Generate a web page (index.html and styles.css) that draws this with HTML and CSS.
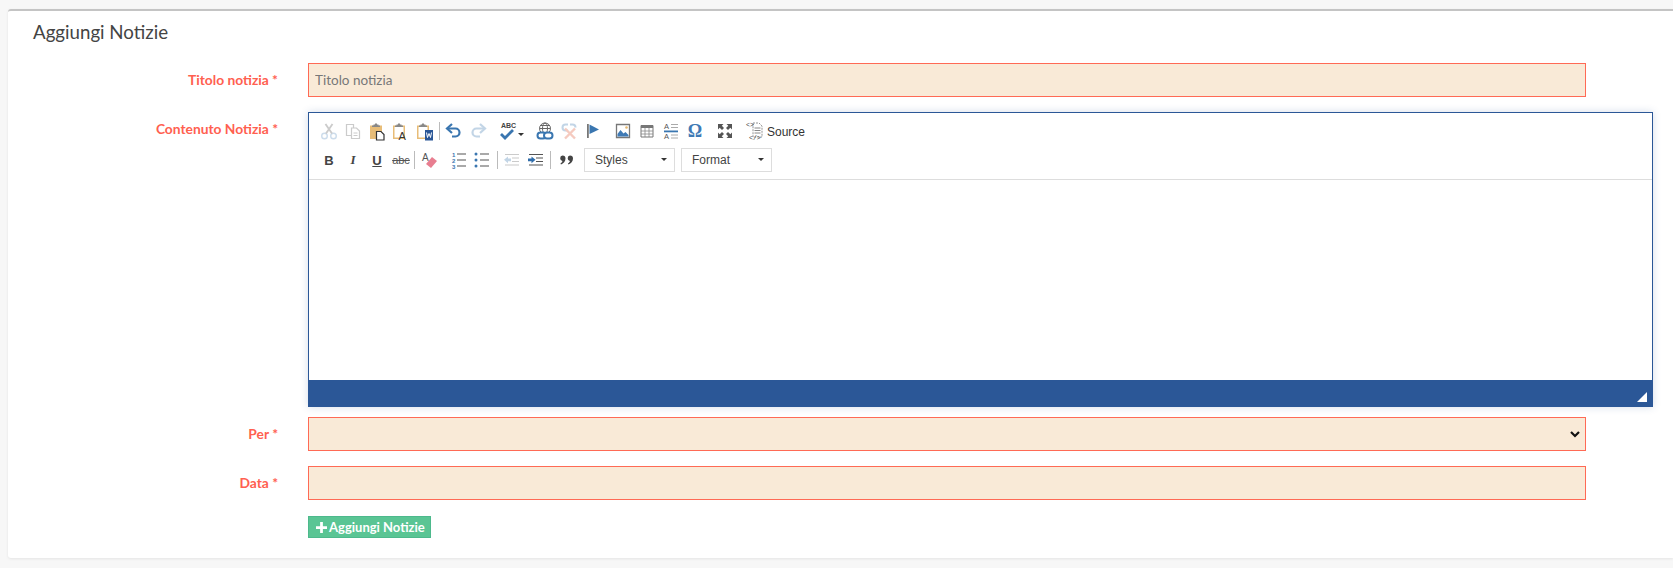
FILE: index.html
```html
<!DOCTYPE html>
<html lang="it">
<head>
<meta charset="utf-8">
<title>Aggiungi Notizie</title>
<link rel="stylesheet" href="styles.css">
</head>
<body>
<main class="card">
  <h2 class="title">Aggiungi Notizie</h2>
  <form class="form">
    <label class="label row-first">Titolo notizia *</label>
    <input class="field field-first" type="text" placeholder="Titolo notizia">

    <label class="label label-top">Contenuto Notizia *</label>
    <div class="editor">
      <div class="toolbar">
        <div class="tbrow">
          <span class="btn off"><svg viewBox="0 0 20 20"><g fill="none" stroke="#5b8fc0" stroke-width="1.4"><circle cx="5.500" cy="15" r="2.800"/><circle cx="14.500" cy="15" r="2.800"/></g><path d="M7 12.500 13.500 3M13 12.500 6.500 3" stroke="#555" stroke-width="1.800" fill="none"/></svg></span>
          <span class="btn off"><svg viewBox="0 0 20 20"><g fill="#fff" stroke="#555" stroke-width="1.200"><path d="M3.500 3.500h7v11h-7z"/><path d="M8.500 7h5l3 3v7.500h-8z"/></g><path d="M10.500 12h4M10.500 14.500h4" stroke="#555"/></svg></span>
          <span class="btn"><svg viewBox="0 0 20 20"><path d="M3 4.500h12v13.500H3z" fill="#e8bd78"/><path d="M6.500 4.500V3.500H8V2.500h2v1h1.500v1H13v1.500H5V4.500z" fill="#888"/><path d="M9.500 10.500h4.500l3 3V19H9.500z" fill="#fff" stroke="#333" stroke-width="1.200"/></svg></span>
          <span class="btn"><svg viewBox="0 0 20 20"><path d="M2 4.500h12v13.500H2z" fill="#e8bd78"/><path d="M3.500 6h9v10.500h-9z" fill="#fff"/><path d="M5.500 4.500V3.500H7V2.500h2v1h1.500v1H12V6H4V4.500z" fill="#888"/><text x="7.500" y="19" class="pastea">A</text></svg></span>
          <span class="btn"><svg viewBox="0 0 20 20"><path d="M2 4.500h12v13.500H2z" fill="#e8bd78"/><path d="M3.500 6h9v10.500h-9z" fill="#fff"/><path d="M5.500 4.500V3.500H7V2.500h2v1h1.500v1H12V6H4V4.500z" fill="#888"/><path d="M10 9h8v10.500h-8z" fill="#2b5797"/><path d="M11.500 11.500l1 5 1.500-4 1.500 4 1-5" stroke="#fff" fill="none"/></svg></span>
          <span class="sep"></span>
          <span class="btn"><svg viewBox="0 0 20 20"><path d="M4 7.500h7.500a4 4 0 0 1 0 8H8" fill="none" stroke="#3a76b0" stroke-width="2.200"/><path d="M8 3 3 7.500 8 12" fill="none" stroke="#3a76b0" stroke-width="2.200"/></svg></span>
          <span class="btn off"><svg viewBox="0 0 20 20"><path d="M16 7.500H8.500a4 4 0 0 0 0 8H12" fill="none" stroke="#3a76b0" stroke-width="2.200"/><path d="M12 3l5 4.500L12 12" fill="none" stroke="#3a76b0" stroke-width="2.200"/></svg></span>
          <span class="btn btn-spell"><svg viewBox="0 0 36 20"><text x="7" y="7" class="abc-small">ABC</text><path d="M7 13l4 4 8-8" fill="none" stroke="#3a76b0" stroke-width="2.800"/><path d="M24 12h6l-3 3z" fill="#333"/></svg></span>
          <span class="btn"><svg viewBox="0 0 20 20"><g fill="none" stroke="#666" stroke-width="1"><circle cx="10" cy="7.500" r="5.500"/><ellipse cx="10" cy="7.500" rx="2.500" ry="5.500"/><path d="M4.500 7.500h11M5.500 4.500h9"/></g><g fill="#fff" stroke="#3a76b0" stroke-width="2"><rect x="2.500" y="11.500" width="8.500" height="6" rx="3"/><rect x="9" y="11.500" width="8.500" height="6" rx="3"/></g></svg></span>
          <span class="btn off"><svg viewBox="0 0 20 20"><g fill="none" stroke="#3a76b0" stroke-width="2"><path d="M9 3.500H6.500a3 3 0 0 0 0 6H9"/><path d="M11 3.500h2.500a3 3 0 0 1 3 3"/></g><path d="M6 7.500l10 10M16 7.500l-10 10" stroke="#e0532f" stroke-width="2.400"/></svg></span>
          <span class="btn"><svg viewBox="0 0 20 20"><path d="M4 3h1.800v14H4z" fill="#777"/><path d="M6.500 3.500 16 8.500l-9.500 4.500z" fill="#3a76b0"/></svg></span>
          <span class="btn ml-6"><svg viewBox="0 0 20 20"><path d="M3.500 3.500h13v13h-13z" fill="#fff" stroke="#777" stroke-width="1.300"/><circle cx="13.500" cy="6.500" r="1.300" fill="#e6b96f"/><path d="M4.500 15.500V13l3-4 3 3.500 2-1.500 3 3v1.500z" fill="#3f7ab5"/></svg></span>
          <span class="btn"><svg viewBox="0 0 20 20"><path d="M4 4.500h12v11.500H4z" fill="#fff" stroke="#777"/><path d="M4 4.500h12v2.500H4z" fill="#777"/><path d="M4 10h12M4 13h12M8 7v9M12 7v9" stroke="#888" stroke-width=".8"/></svg></span>
          <span class="btn"><svg viewBox="0 0 20 20"><path d="M3 9.500h14v1.800H3z" fill="#3a76b0"/><path d="M10 3.500h7M10 6.500h7M10 14h7M10 17h7" stroke="#aaa" stroke-width="1"/><text x="3" y="8" class="bidi">A</text><text x="3" y="18" class="bidi">A</text></svg></span>
          <span class="btn"><svg viewBox="0 0 20 20"><text x="10" y="16" class="omega">Ω</text></svg></span>
          <span class="btn ml-6"><svg viewBox="0 0 20 20"><path d="M3 3h5.500L6.800 4.700 9 7 7 9 4.700 6.800 3 8.500zM17 3v5.500l-1.700-1.700L13 9l-2-2 2.300-2.300L11.500 3zM3 17v-5.500l1.700 1.700L7 11l2 2-2.300 2.300L8.500 17zM17 17h-5.500l1.700-1.700L11 13l2-2 2.300 2.300 1.700-1.800z" fill="#555"/></svg></span>
          <span class="btn-source"><svg class="src-icon" viewBox="0 0 22 20"><path d="M8 2h6l3 3v11H8z" fill="none" stroke="#888" stroke-width=".9" stroke-dasharray="2 1"/><path d="M9.500 7h6M9.500 9.500h6M9.500 12h6" stroke="#888"/><text x="1" y="6" class="srcbr">&lt;&gt;</text><text x="4" y="19" class="srcbr">&lt;/&gt;</text></svg><span class="src-text">Source</span></span>
        </div>
        <div class="tbrow tbrow-second">
          <span class="btn txt bold">B</span>
          <span class="btn txt ital">I</span>
          <span class="btn txt under">U</span>
          <span class="btn txt strike">abc</span>
          <span class="sep sep-a"></span>
          <span class="btn"><svg viewBox="0 0 20 20"><text x="2" y="11" class="bidi-lg">A</text><path d="M12 7l5 4-6 7-5-4z" fill="#e87e90"/></svg></span>
          <span class="btn ml-5"><svg viewBox="0 0 20 20"><path d="M8 4h9M8 10h9M8 16h9" stroke="#555" stroke-width="1.200"/><text x="3" y="6.500" class="num">1</text><text x="3" y="12.500" class="num">2</text><text x="3" y="18.500" class="num">3</text></svg></span>
          <span class="btn mln1"><svg viewBox="0 0 20 20"><path d="M8 4h9M8 10h9M8 16h9" stroke="#555" stroke-width="1.200"/><g fill="#3a76b0"><circle cx="4" cy="4" r="1.500"/><circle cx="4" cy="10" r="1.500"/><circle cx="4" cy="16" r="1.500"/></g></svg></span>
          <span class="sep sep-b"></span>
          <span class="btn off"><svg viewBox="0 0 20 20"><path d="M3 4.500h14M10 8h7M10 11.500h7M3 15h14" stroke="#555" stroke-width="1.200"/><path d="M2 9.800 6 6.500v2h3v2.800H6v2z" fill="#3a76b0"/></svg></span>
          <span class="btn"><svg viewBox="0 0 20 20"><path d="M3 4.500h14M10 8h7M10 11.500h7M3 15h14" stroke="#555" stroke-width="1.200"/><path d="M9.500 9.800 5.500 6.500v2H2v2.800h3.500v2z" fill="#2f6dab"/></svg></span>
          <span class="sep sep-c"></span>
          <span class="btn"><svg viewBox="0 0 20 20"><path d="M6.500 5.500A3 3 0 0 1 9.500 8.500c0 3-2 5-4.500 6l-.6-1.100c1.200-.6 1.900-1.500 2-2.400a2.800 2.800 0 0 1 .1-5.500zM14 5.500a3 3 0 0 1 3 3c0 3-2 5-4.500 6l-.6-1.100c1.200-.6 1.900-1.500 2-2.400a2.800 2.800 0 0 1 .1-5.500z" fill="#444"/></svg></span>
          <span class="combo combo-a">Styles<i class="caret"></i></span>
          <span class="combo combo-b">Format<i class="caret"></i></span>
        </div>
      </div>
      <div class="content"></div>
      <div class="bottom"><i class="resize"></i></div>
    </div>

    <label class="label label-per">Per *</label>
    <select class="field select field-per"><option></option></select>

    <label class="label">Data *</label>
    <input class="field" type="text">

    <span></span>
    <div class="actions"><button class="submit" type="button"><svg class="plus" viewBox="0 0 12 12"><path d="M4.500 0h3v4.500H12v3H7.500V12h-3V7.500H0v-3h4.500z" fill="#fff"/></svg>Aggiungi Notizie</button></div>
  </form>
</main>
</body>
</html>
```

FILE: styles.css
```css
* { box-sizing: border-box; }
html, body { height: 100%; }
body {
  margin: 0;
  padding: 9px 0 10px 8px;
  background: #f7f7f7;
  font-family: Lato, "Noto Sans", sans-serif;
  overflow: hidden;
}
.card {
  height: 549px;
  background: #fff;
  border-top: 2px solid #c4c4c4;
  border-radius: 3px 0 0 3px;
  box-shadow: 0 1px 3px rgba(0,0,0,.08);
  padding: 0 0 0 25px;
}
.title {
  margin: 0;
  padding-top: 9px;
  font-size: 18.700px;
  line-height: 24px;
  font-weight: 400;
  color: #444;
}
.form {
  display: grid;
  grid-template-columns: 245px 1fr;
  column-gap: 30px;
  margin-top: 19px;
  align-items: center;
}
.label {
  text-align: right;
  font-size: 13.800px;
  font-weight: 700;
  color: #ff6050;
  line-height: 20px;
  margin-top: 15px;
  align-self: center;
}
.row-first { margin-top: 0; }
.label-top { align-self: start; margin-top: 22px; }
.label-per { margin-top: 10px; }
.field {
  display: block;
  width: 1278px;
  height: 34px;
  margin: 15px 0 0;
  padding: 0 6px;
  border: 1px solid #ff6a55;
  border-radius: 0;
  background: #f9ead7;
  font-family: inherit;
  font-size: 13.500px;
  color: #555;
  outline: none;
}
.field-first { margin-top: 0; }
.field-per { margin-top: 10px; }
.field::placeholder { color: #777; opacity: 1; }
.select {
  appearance: none;
  background-image: url("data:image/svg+xml,%3Csvg xmlns='http://www.w3.org/2000/svg' width='10' height='7'%3E%3Cpath d='M1 1l4 4 4-4' fill='none' stroke='%23111' stroke-width='2.200'/%3E%3C/svg%3E");
  background-repeat: no-repeat;
  background-position: right 5px center;
}
.editor {
  width: 1345px;
  height: 295px;
  margin-top: 15px;
  border: 1px solid #2b5797;
  border-bottom: 0;
  box-shadow: 0 0 8px rgba(43,87,151,.2);
  display: flex;
  flex-direction: column;
  background: #fff;
}
.toolbar {
  height: 67px;
  padding: 4px 0 0 8px;
  border-bottom: 1px solid #ddd;
  flex: none;
}
.tbrow { display: flex; align-items: center; height: 28px; }
.tbrow-second { margin-top: 1px; }
.btn {
  flex: none;
  width: 24px;
  height: 24px;
  display: flex;
  align-items: center;
  justify-content: center;
}
.btn svg { width: 20px; height: 20px; display: block; }
.off svg { opacity: .3; }
.btn-spell { width: 36px; margin: 0 3px 0 4px; }
.btn-spell svg { width: 36px; }
.sep { flex: none; width: 1px; height: 18px; background: #bbb; margin: 0 2px 0 2px; }
.sep-a { margin: 0 3px 0 1px; }
.sep-b { margin: 0 2px 0 3px; }
.sep-c { margin: 0 3px 0 2px; }
.ml-6 { margin-left: 6px; }
.ml-5 { margin-left: 5px; }
.mln1 { margin-left: -1px; }
.btn-source { display: flex; align-items: center; margin-left: 8px; }
.src-icon { width: 22px; height: 20px; display: block; flex: none; }
.src-text { font: 12px/20px "Liberation Sans", Arial, sans-serif; color: #333; padding-top: 1px; }
.txt { font: 700 13px "Liberation Sans", Arial, sans-serif; color: #444; }
.ital { font-style: italic; font-family: "Liberation Serif", serif; font-size: 13px; }
.under { text-decoration: underline; }
.strike { text-decoration: line-through; font-weight: 400; font-size: 11px; color: #555; }
.combo {
  flex: none;
  position: relative;
  width: 91px;
  height: 24px;
  border: 1px solid #ddd;
  font: 12px/22px "Liberation Sans", Arial, sans-serif;
  color: #444;
  padding-left: 10px;
}
.combo-a { margin-left: 6px; }
.combo-b { margin-left: 6px; }
.caret {
  position: absolute;
  right: 7px;
  top: 9px;
  border: 3px solid transparent;
  border-top: 3px solid #333;
  border-bottom: 0;
}
.content { flex: 1; }
.bottom {
  flex: none;
  position: relative;
  height: 27px;
  background: #2b5797;
}
.resize {
  position: absolute;
  right: 5px;
  bottom: 5px;
  width: 0;
  height: 0;
  border-left: 10px solid transparent;
  border-bottom: 10px solid #fff;
}
.actions { margin-top: 16px; }
.submit {
  display: flex;
  align-items: center;
  width: 123px;
  height: 22px;
  padding: 0 0 0 7px;
  border: 1px solid #4db98c;
  background: #5ac594;
  color: #fff;
  font-family: inherit;
  font-size: 13px;
  font-weight: 700;
  white-space: nowrap;
}
.plus { width: 11px; height: 11px; margin-right: 2px; flex: none; }
.pastea { font: 11px "Liberation Sans", Arial, sans-serif; fill: #333; }
.abc-small { font: 700 7px "Liberation Sans", Arial, sans-serif; fill: #444; }
.bidi { font: 7.500px "Liberation Sans", Arial, sans-serif; fill: #555; }
.bidi-lg { font: 10px "Liberation Sans", Arial, sans-serif; fill: #555; }
.omega { font: 700 18px "Liberation Serif", serif; fill: #3f7ab5; text-anchor: middle; }
.num { font: 700 6px "Liberation Sans", Arial, sans-serif; fill: #3a76b0; }
.srcbr { font: 6.500px "Liberation Mono", monospace; fill: #444; }
```
